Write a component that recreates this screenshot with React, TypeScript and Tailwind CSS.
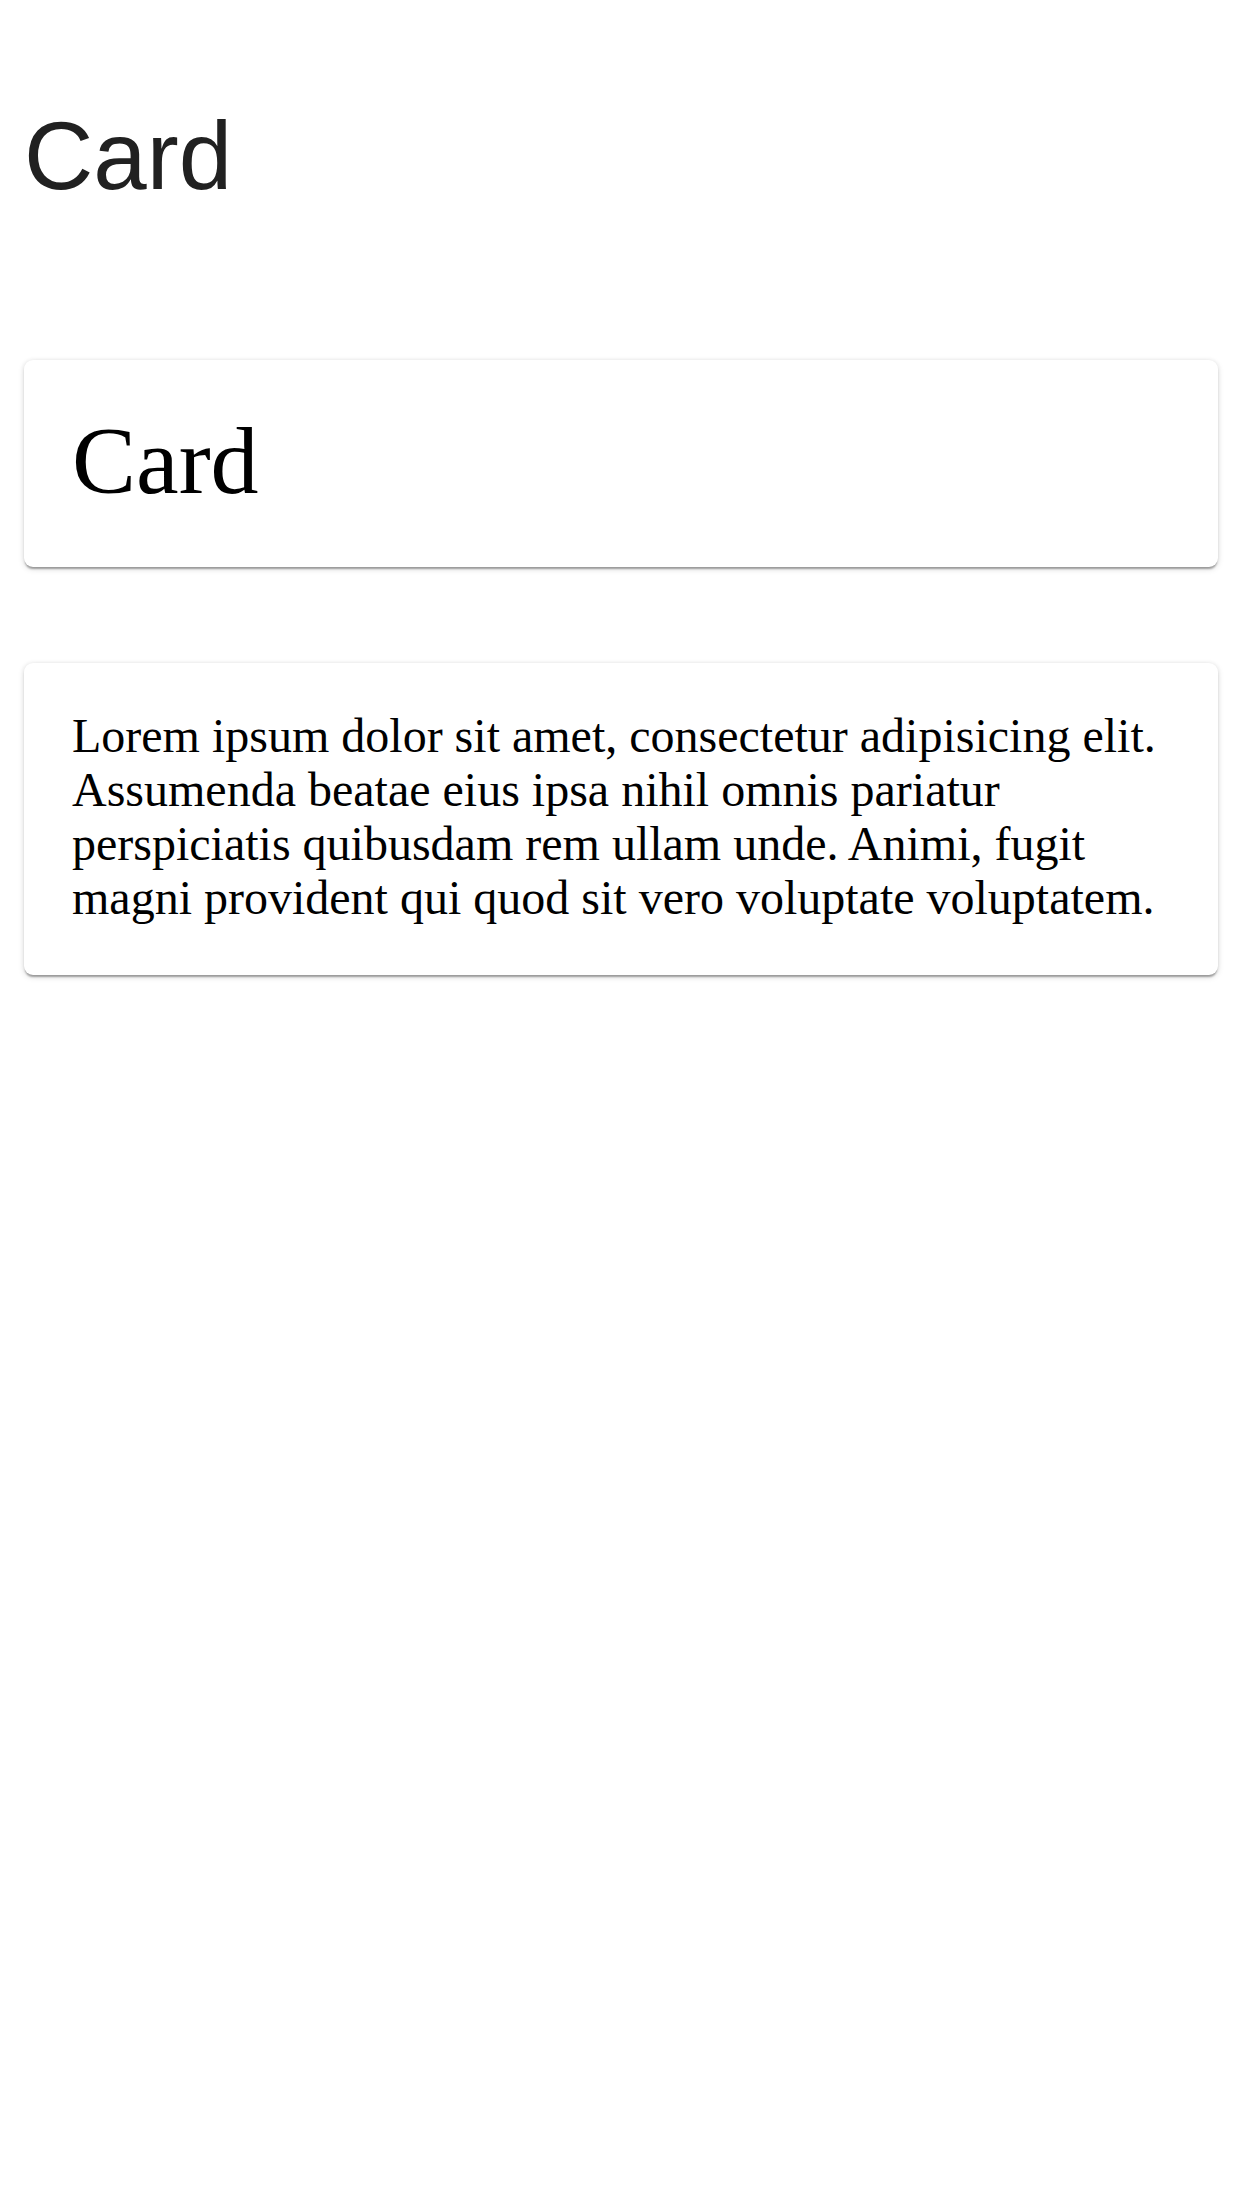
export default function App() {
  const cardClass =
    'bg-white rounded-[9px] shadow-[0_3px_2px_-1px_rgba(0,0,0,0.32),0_2px_6px_0_rgba(0,0,0,0.14),0_0_4px_0_rgba(0,0,0,0.06)]';

  return (
    <div className="min-h-[2208px] bg-white px-6">
      {/* page heading */}
      <h1 className="pt-[101px] font-['Liberation_Sans',Arial,sans-serif] text-[96px] leading-[110px] text-[#212121]">
        Card
      </h1>

      <div className={`mt-[149px] ${cardClass} px-12 pt-[46px] pb-[51px]`}>
        <h2 className="font-['Liberation_Serif',serif] text-[96px] leading-[110px] text-black">
          Card
        </h2>
      </div>

      <div className={`mt-[96px] ${cardClass} px-12 pt-[46px] pb-[50px]`}>
        <p className="font-['Liberation_Serif',serif] text-[48px] leading-[54px] text-black">
          Lorem ipsum dolor sit amet, consectetur adipisicing elit. Assumenda
          beatae eius ipsa nihil omnis pariatur perspiciatis quibusdam rem
          ullam unde. Animi, fugit magni provident qui quod sit vero voluptate
          voluptatem.
        </p>
      </div>
    </div>
  );
}
